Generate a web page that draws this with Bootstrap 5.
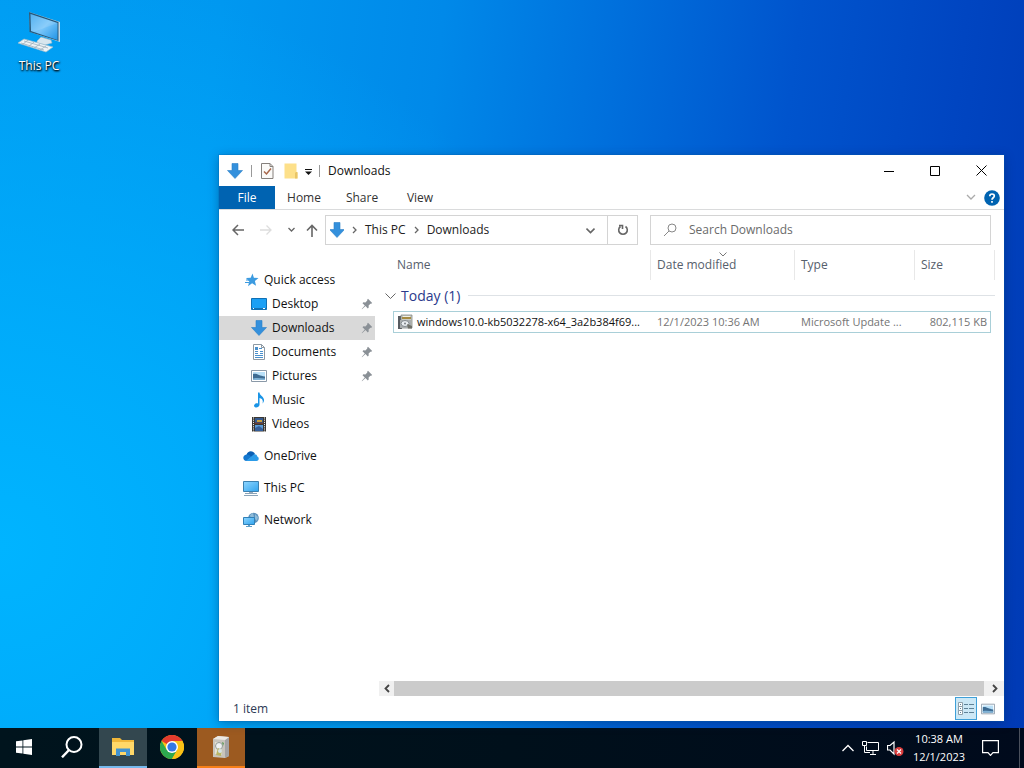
<!DOCTYPE html>
<html lang="en">
<head>
<meta charset="utf-8">
<meta name="viewport" content="width=device-width, initial-scale=1">
<title>Downloads</title>
<link href="https://cdn.jsdelivr.net/npm/bootstrap@5.3.0/dist/css/bootstrap.min.css" rel="stylesheet">
<script src="https://cdn.jsdelivr.net/npm/bootstrap@5.3.0/dist/js/bootstrap.bundle.min.js"></script>
<style>
  body { font: 12px/16px "Open Sans", "Noto Sans", sans-serif; color: #111; background: #0078d7; }
  a { color: inherit; text-decoration: none; }
  svg { display: block; flex: none; }
  .plain { border: 0; padding: 0; background: none; color: inherit; display: flex; align-items: center; justify-content: center; }
  .ln { fill: none; stroke: currentColor; }

  .wallpaper {
    background:
      radial-gradient(ellipse 62% 80% at 0% 75%, #00b4ff 0%, #00b0fdcc 35%, #00a4f800 100%),
      linear-gradient(97deg, #009cf2 0%, #0098f0 20%, #0089e9 40%, #006fdc 56%, #0054cd 72%, #0045c1 87%, #003ab5 100%);
  }
  .desk-icon { left: 2px; top: 10px; width: 74px; gap: 2px; color: #fff; text-shadow: 1px 1px 2px #000, 0 1px 2px #000; }
  .explorer { left: 219px; right: 20px; top: 155px; bottom: 7px; background: #fff; box-shadow: 0 0 0 1px #0060b040, 0 2px 10px #00245066; }

  .title-row { height: 31px; padding-left: 8px; }
  .tools { gap: 6px; margin: 0 6px 0 8px; }
  .sep { width: 1px; height: 12px; background: #999; }
  .cap { width: 46px; height: 31px; color: #000; }
  .tab-row { height: 24px; border-bottom: 1px solid #dadbdc; color: #333; }
  .tab-row .tab { width: 58px; text-align: center; line-height: 24px; }
  .tab-row .file-tab { width: 56px; background: #0063b1; color: #fff; height: 23px; }
  .address-row { height: 40px; padding: 5px 13px 5px 9px; color: #666; }
  .go-up { margin: 0 3px 0 7px; }
  .boxed { height: 30px; border: 1px solid #d4d4d4; }
  .address { flex: 312 1 0; color: #222; }
  .search { flex: 332 1 0; color: #888; margin-left: 12px; }
  .search input { border: 0; outline: 0; background: none; color: #666; padding: 0; }
  .search input::placeholder { color: #6b6b6b; opacity: 1; }
  .refresh { width: 30px; height: 28px; border-left: 1px solid #d4d4d4; color: #666; }
  .chev { fill: none; stroke: #666; }

  .tree { flex: none; width: 156px; padding-top: 18px; }
  .tree a { display: flex; align-items: center; height: 24px; padding-left: 24px; }
  .tree a svg:first-child { margin-right: 5px; }
  .tree .sub a { padding-left: 32px; }
  .tree .sub a.on { background: #d9d9d9; }
  .tree .pin { margin-left: auto; margin-right: 2px; color: #8a9096; }
  .files { margin-left: 4px; min-width: 0; }
  .list-area { padding: 0 9px 0 5px; }

  .listing { table-layout: fixed; width: 100%; border-collapse: separate; border-spacing: 0; }
  .listing th, .listing td { font-weight: 400; padding: 0 6px; white-space: nowrap; }
  .listing thead th { height: 30px; color: #56606c; border-right: 1px solid #e8e8e8; }
  .listing thead th.open, .listing thead th:first-child { border-right: 0; }
  .listing .group { height: 31px; font-size: 14px; color: #2b3a8c; padding: 0; }
  .listing tbody td { height: 22px; font-size: 11px; color: #747474; border: 1px solid #a9cfd8; border-width: 1px 0; }
  .listing tbody td.lead-cell { border-left-width: 1px; color: #111; padding: 0 0 0 3px; }
  .listing tbody td.last-cell { border-right-width: 1px; padding-right: 3px; text-align: right; }
  .listing tbody td.bare { border: 0; padding: 0; }
  .sort { position: absolute; left: 68px; top: 2px; color: #777; }
  .hscroll { height: 15px; background: #f0f0f0; color: #444; padding-right: 2px; }
  .hscroll button { width: 15px; height: 15px; }
  .hscroll .thumb { background: #cbcbcb; margin-right: 3px; }
  .status { height: 25px; padding: 0 5px 0 14px; color: #2c3a55; }
  .view-on { width: 22px; height: 23px; border: 1px solid #3fa0d8; background: #cce8f6; }
  .view-off { width: 22px; height: 23px; }

  .taskbar { height: 40px; background: linear-gradient(90deg, #00141d, #00101b 50%, #000a1c); color: #fff; }
  .taskbar .app { width: 48px; height: 40px; border-bottom: 2px solid transparent; }
  .taskbar .app.files-app { background: #33474f; border-color: #76b9ed; margin: 0 1px 0 3px; }
  .taskbar .app.alert-app { background: #9c5a20; border-color: #f77f18; margin-left: 1px; }
  .clock { width: 70px; font-size: 11px; line-height: 18px; text-align: center; }
  .notify { margin: 0 20px 0 8px; }
  .peek { width: 5px; height: 40px; border-left: 1px solid #4a505c; }
</style>
</head>
<body>
<svg width="0" height="0" class="position-absolute" aria-hidden="true">
  <defs>
    <linearGradient id="blue" x1="0" y1="0" x2="1" y2="1"><stop offset="0" stop-color="#8fd6ff"/><stop offset="1" stop-color="#2fa3ee"/></linearGradient>
    <linearGradient id="screen" x1="0" y1="0" x2="1" y2="1"><stop offset="0" stop-color="#3ba6ee"/><stop offset=".5" stop-color="#79c6fa"/><stop offset="1" stop-color="#1f94e6"/></linearGradient>
    <symbol id="down" viewBox="0 0 16 16"><path d="M5 .5h6v7h4.500L8 15.500.5 7.500H5z" fill="#3490dc" stroke="#2a7fc8" stroke-width=".6"/></symbol>
    <symbol id="pic" viewBox="0 0 16 16"><path d="M.5 2.500h15v11H.5z" fill="#fff" stroke="#8a99a8"/><path d="M2 4h12v8H2z" fill="#b9e0f8"/><path d="M2 6c4-1 6 2 12 2.500V12H2z" fill="#3e6c93"/><path d="M2 10.500c4-1 8 0 12 0V12H2z" fill="#7fb2d6"/></symbol>
    <symbol id="pin" viewBox="0 0 12 12"><path d="M7 .8 11.200 5l-1 .8-.8-.1-1.800 1.800.1 2-.9.900L4.500 8.100 1 11.200.7 11 3.800 7.500 1.500 5.200l.9-.9 2 .1 1.900-1.800-.1-.9z" fill="currentColor"/></symbol>
    <symbol id="box" viewBox="0 0 16 16"><path d="M1 2h4v13H1z" fill="#565b60"/><path d="M4 1h11v13H4z" fill="#c9cbc4" stroke="#777b7a" stroke-width=".7"/><path d="M5 3h9v2H5z" fill="#a58b42"/><path d="M6 2h7v1H6z" fill="#f1efe2"/><path d="M3 6h11v8H3z" fill="#a9adae"/><ellipse cx="8" cy="9.500" rx="4" ry="3" fill="#e9edf0" stroke="#848b90"/><circle cx="8" cy="9.500" r="1" fill="#7b8086"/><path d="m10 10 5 2v2.500h-4z" fill="#6e6f68"/></symbol>
  </defs>
</svg>

<div class="d-flex flex-column vh-100 overflow-hidden">
  <main class="wallpaper position-relative flex-grow-1">
    <a href="#" class="desk-icon position-absolute d-flex flex-column align-items-center">
      <svg width="46" height="46" viewBox="0 0 46 46">
        <path d="m21 31 4-4 10 3 1 3-7 2-8-2z" fill="#d8e6ee" stroke="#8fb4c8" stroke-width=".6"/>
        <path d="m13 2 31 10v20L14 22z" fill="#c3dbe8"/><path d="m13 2 29.500 10v19L13.500 22z" fill="#26597c"/>
        <path d="m14.500 4 27 9v17l-26.500-9z" fill="url(#screen)"/><path d="m14.500 4 27 9-24 9-2.500-1z" fill="#fff" opacity=".13"/>
        <path d="m2 33 6-4 29 8-7 5z" fill="#eef3f6" stroke="#9dbccb" stroke-width=".7"/>
        <path d="m5 33 23 7M8 31l24 7M12 30l-6 5M18 32l-6 5M24 34l-6 4M30 36l-6 4" stroke="#9db0bc" fill="none" stroke-width=".8"/>
      </svg>
      <span>This PC</span>
    </a>

    <section class="explorer position-absolute d-flex flex-column">
      <header class="title-row d-flex align-items-center">
        <svg width="16" height="16"><use href="#down"/></svg>
        <span class="sep ms-2"></span>
        <div class="tools d-flex align-items-center">
          <button class="plain" aria-label="Properties"><svg width="14" height="16" viewBox="0 0 14 16"><path d="M1.500.5H10l3 3v12H1.500z" fill="#fbfaf8" stroke="#85807c"/><path d="M10 .5v3h3" fill="none" stroke="#85807c"/><path d="m4 8.500 2.500 2.500L11 5.500" fill="none" stroke="#a8674a" stroke-width="1.500"/></svg></button>
          <button class="plain ms-1" aria-label="New folder"><svg width="14" height="16" viewBox="0 0 14 16"><path d="M.5.500h12V9l1 1v5.500H.5z" fill="#fde08a"/><path d="M12 9h1.500v6.500H11V10z" fill="#e9c566"/></svg></button>
          <button class="plain" aria-label="Customize toolbar"><svg width="9" height="10" viewBox="0 0 9 10"><path d="M1 3.500h7" stroke="#111"/><path d="M1 5.500h7L4.500 9z" fill="#111"/></svg></button>
        </div>
        <span class="sep me-2"></span>
        <span>Downloads</span>
        <button class="plain cap ms-auto" aria-label="Minimize"><svg width="10" height="10"><path class="ln" d="M0 5.500h10"/></svg></button>
        <button class="plain cap" aria-label="Maximize"><svg width="10" height="10"><path class="ln" d="M.5.500h9v9h-9z"/></svg></button>
        <button class="plain cap" aria-label="Close"><svg width="11" height="11"><path class="ln" d="m.5.500 10 10m0-10-10 10"/></svg></button>
      </header>

      <nav class="tab-row d-flex align-items-center">
        <a href="#" class="tab file-tab">File</a><a href="#" class="tab">Home</a><a href="#" class="tab">Share</a><a href="#" class="tab">View</a>
        <button class="plain ms-auto" aria-label="Expand ribbon"><svg width="10" height="8" viewBox="0 0 10 8"><path fill="none" stroke="#aaa" stroke-width="1.300" d="m1 1 4 4 4-4"/></svg></button>
        <button class="plain me-1 ms-2" aria-label="Help"><svg width="16" height="16" viewBox="0 0 16 16"><circle cx="8" cy="8" r="7.800" fill="#0063b1"/><path d="M5.800 6.200C5.800 3.200 10.400 3.400 10.300 6 10.200 7.800 8 7.800 8 9.800M8 11v1.800" fill="none" stroke="#fff" stroke-width="1.700"/></svg></button>
      </nav>

      <div class="address-row d-flex align-items-center">
        <button class="plain ms-1" aria-label="Back"><svg width="12" height="12" viewBox="0 0 12 12"><path class="ln" stroke-width="1.500" d="M12 6H1m5-5L1 6l5 5"/></svg></button>
        <button class="plain ms-3" aria-label="Forward" disabled><svg width="12" height="12" viewBox="0 0 12 12"><path d="M0 6h11M6.500 1.500 11 6l-4.500 4.500" stroke="#ddd" stroke-width="1.300" fill="none"/></svg></button>
        <button class="plain ms-3" aria-label="Recent locations"><svg width="7" height="6" viewBox="0 0 7 6"><path class="ln" stroke-width="1.300" d="m.5 1 3 3 3-3"/></svg></button>
        <button class="plain go-up px-1" aria-label="Up"><svg width="12" height="13" viewBox="0 0 12 13"><path class="ln" stroke-width="1.600" d="M6 13V1M1 6.500l5-5 5 5"/></svg></button>
        <div class="address boxed d-flex align-items-center">
          <svg class="ms-1 me-2" width="14" height="16" viewBox="1 0 14 16"><use href="#down" width="16" height="16"/></svg>
          <svg width="5" height="8" viewBox="0 0 5 8"><path class="chev" stroke-width="1.300" d="m1 1 3 3-3 3"/></svg>
          <a href="#" class="mx-2">This PC</a>
          <svg width="5" height="8" viewBox="0 0 5 8"><path class="chev" stroke-width="1.300" d="m1 1 3 3-3 3"/></svg>
          <a href="#" class="mx-2">Downloads</a>
          <button class="plain ms-auto me-1 px-1" aria-label="Previous locations"><svg class="me-1" width="9" height="7" viewBox="0 0 9 7"><path class="chev" stroke-width="1.600" d="m.5 1.500 4 4 4-4"/></svg></button>
          <button class="plain refresh" aria-label="Refresh"><svg width="12" height="12" viewBox="0 0 12 12"><path class="ln" stroke-width="1.600" d="M8.500 2.500a4.300 4.300 0 1 1-5 0M2 1.500h3.500V5"/></svg></button>
        </div>
        <label class="search boxed d-flex align-items-center ps-2">
          <svg class="ms-1 me-2" width="14" height="14" viewBox="0 0 14 14"><circle cx="9" cy="5" r="4" class="ln"/><path class="ln" d="M6 8 1 13"/></svg>
          <input type="search" class="flex-grow-1 ms-1" placeholder="Search Downloads" aria-label="Search Downloads">
        </label>
      </div>

      <div class="d-flex flex-grow-1">
        <nav class="tree">
          <a href="#"><svg width="16" height="16" viewBox="0 0 16 16"><path d="m9.500 1.500 1.400 4.300 4.600.2-3.600 3 1.200 4.800-4-2.500-4.100 3L6.300 9.500 3 6l4.700-.2z" fill="#3c9be0"/><path d="M3 8h3M2 10.500h4" stroke="#3c9be0"/></svg>Quick access</a>
          <div class="sub">
            <a href="#"><svg width="16" height="16" viewBox="0 0 16 16"><path d="M.5 2.500h15v11H.5z" fill="#1ba0f5" stroke="#1070b4"/><path d="M1 12.500h14" stroke="#1272b5"/><path d="M2 12.500h1m9 0h2" stroke="#fff"/></svg>Desktop<svg class="pin" width="12" height="12"><use href="#pin"/></svg></a>
            <a href="#" class="on"><svg width="16" height="16"><use href="#down"/></svg>Downloads<svg class="pin" width="12" height="12"><use href="#pin"/></svg></a>
            <a href="#"><svg width="16" height="16" viewBox="0 0 16 16"><path d="M2.500.5h8l3 3v12h-11z" fill="#fff" stroke="#8d99a3"/><path d="M10.500.5v3h3" fill="none" stroke="#8d99a3"/><path d="M4 7.500h3m2 0h3M4 9.500h3m2 0h3M4 11.500h8M4 13.500h8M8 4.500h3" stroke="#4a90cc"/><path d="M4 3h3v3H4z" fill="#4a90cc"/></svg>Documents<svg class="pin" width="12" height="12"><use href="#pin"/></svg></a>
            <a href="#"><svg width="16" height="16"><use href="#pic"/></svg>Pictures<svg class="pin" width="12" height="12"><use href="#pin"/></svg></a>
            <a href="#"><svg width="16" height="16" viewBox="0 0 16 16"><path d="M7 .5h1.500C9 4 13.500 5 13 8.500c-.2 1.500-.8 2.300-1.500 3C12.500 8 11 6.500 8.500 6v7c-.3 1.700-2 2.700-3.700 2.500-1.700-.3-2.300-1.700-1.300-3 .8-1.100 2.300-1.500 3.500-1z" fill="#1a94e6"/></svg>Music</a>
            <a href="#"><svg width="16" height="16" viewBox="0 0 16 16"><path d="M1 1h14v14.500H1z" fill="#3a3733"/><path d="M4 2h8v6H4z" fill="#34598e"/><path d="M4 9h8v6H4z" fill="#5b9bd6"/><path d="M6 4h5v2H6z" fill="#c9a23e"/><path d="M4 6.500h8V8H4z" fill="#6a3d35"/><path d="m4 12 4-2 4 3v2H4z" fill="#345e99"/><path d="M2.500 1.500v14M13.500 1.500v14" stroke="#fff" stroke-dasharray="1 1.200"/></svg>Videos</a>
          </div>
          <a href="#" class="mt-2"><svg width="16" height="16" viewBox="0 0 16 16"><path d="M3.500 7C4.500 2.500 10 2 12 6l-4 4z" fill="#0a5fb4"/><path d="M3.500 13C-.5 13-1 7 3.500 6.500c2-.3 3.500.8 5 2.500z" fill="#1377cf"/><path d="M3 13 9.500 7.500C11 5.500 14 6 14.200 8.500c2 .5 2.300 4.300-.7 4.500z" fill="#2b9be8"/></svg>OneDrive</a>
          <a href="#" class="mt-2"><svg width="16" height="16" viewBox="0 0 16 16"><path d="M.5 1.500h15v10H.5z" fill="url(#blue)" stroke="#3a80b0"/><path d="M6 12h4v1H6z" fill="#9ab"/><path d="M2 13.500h12M1 15.500h14" stroke="#8ba4b8"/></svg>This PC</a>
          <a href="#" class="mt-2"><svg width="16" height="16" viewBox="0 0 16 16"><circle cx="10.500" cy="6" r="5.300" fill="#5a90bb"/><path d="m7 3 3-2 1 4-3 3zM12 2l3 3-1 4-2-2z" fill="#8fbbd8"/><path d="M.5 5.500h11v7H.5z" fill="url(#blue)" stroke="#2f80b8"/><path d="M5 13h2v1H5zM3 14h6v1H3z" fill="#5f9fc8"/></svg>Network</a>
        </nav>

        <div class="files flex-grow-1 d-flex flex-column">
          <div class="list-area flex-grow-1">
            <table class="listing">
              <colgroup><col style="width:9px"><col><col style="width:144px"><col style="width:120px"><col style="width:76px"><col style="width:4px"></colgroup>
              <thead>
                <tr><th></th><th class="ps-1">Name</th><th class="position-relative">Date modified<svg class="sort" width="8" height="5" viewBox="0 0 8 5"><path class="ln" d="m.5.500 3.500 3.500L7.500.500"/></svg></th><th>Type</th><th class="open">Size</th><th class="p-0"></th></tr>
              </thead>
              <tbody>
                <tr><th class="group" colspan="6"><div class="d-flex align-items-center"><svg width="13" height="8" viewBox="0 0 13 8"><path class="chev" d="m1.500 1.500 5 5 5-5"/></svg><span class="ms-1 me-2">Today (1)</span><span class="flex-grow-1 border-top"></span></div></th></tr>
                <tr>
                  <td class="bare"></td>
                  <td class="lead-cell"><div class="d-flex align-items-center"><svg class="me-1" width="16" height="16"><use href="#box"/></svg>windows10.0-kb5032278-x64_3a2b384f69...</div></td>
                  <td>12/1/2023 10:36 AM</td><td>Microsoft Update ...</td><td class="last-cell">802,115 KB</td><td class="bare"></td>
                </tr>
              </tbody>
            </table>
          </div>
          <div class="hscroll d-flex">
            <button class="plain" aria-label="Scroll left"><svg width="6" height="9" viewBox="0 0 6 9"><path class="ln" stroke-width="1.800" d="m5 1-3.500 3.500L5 8"/></svg></button>
            <div class="thumb flex-grow-1"></div>
            <button class="plain" aria-label="Scroll right"><svg width="6" height="9" viewBox="0 0 6 9"><path class="ln" stroke-width="1.800" d="m1 1 3.500 3.500L1 8"/></svg></button>
          </div>
        </div>
      </div>

      <footer class="status d-flex align-items-center">
        <span class="me-auto">1 item</span>
        <button class="plain view-on" aria-label="Details view"><svg width="16" height="14" viewBox="0 0 16 14"><path d="M.5.500h4v4h-4zM.5 4.500h4v4h-4zM.5 8.500h4v4h-4z" fill="#fff" stroke="#8fa0aa"/><path d="M2 2.500h1m-1 4h1m-1 4h1M6 2.500h4m1 0h5m-10 4h4m1 0h5m-10 4h4m1 0h5" stroke="#5f8297"/></svg></button>
        <button class="plain view-off" aria-label="Thumbnail view"><svg width="14" height="14"><use href="#pic"/></svg></button>
      </footer>
    </section>
  </main>

  <footer class="taskbar d-flex align-items-center">
    <button class="plain app" aria-label="Start"><svg width="16" height="16" viewBox="0 0 16 16"><path d="M0 2.300 6.500 1.400v6.200H0zM7.300 1.200 16 0v7.600H7.300zM0 8.400h6.500v6.200L0 13.700zM7.300 8.400H16V16l-8.700-1.200z" fill="#fff"/></svg></button>
    <button class="plain app" aria-label="Search"><svg width="22" height="22" viewBox="0 0 22 22"><circle cx="13" cy="8.500" r="7.500" class="ln" stroke-width="2"/><path class="ln" stroke-width="2.400" d="M8 14 1 21.300"/></svg></button>
    <button class="plain app files-app" aria-label="File Explorer"><svg width="22" height="18" viewBox="0 0 22 18"><path d="M0 0h8l2 2h12v15H0z" fill="#f0b73a"/><path d="M0 4h22v13H0z" fill="#ffd869"/><path d="M4 18v-7.500h14V18h-4v-4H8v4z" fill="#4293d0"/></svg></button>
    <button class="plain app" aria-label="Google Chrome"><svg width="24" height="24" viewBox="0 0 24 24"><circle cx="12" cy="12" r="12" fill="#fbc116"/><path d="M12 12 1.600 6A12 12 0 0 1 22.400 6z" fill="#e33b2e"/><path d="M1.600 6A12 12 0 0 0 12 24l5.200-9H6.800z" fill="#2da94f"/><path d="M12 6h10.400A12 12 0 0 1 12 24l5.200-9z" fill="#fbc116"/><circle cx="12" cy="12" r="6" fill="#fff"/><circle cx="12" cy="12" r="4.600" fill="#3478e5"/></svg></button>
    <button class="plain app alert-app" aria-label="Update Installer"><svg width="20" height="24" viewBox="0 0 20 24"><path d="m2 4 5-3 11 1v19l-4 2-12-1z" fill="#c8c4bc"/><path d="m14 5 4-3v19l-4 2z" fill="#a3a2a4"/><path d="m2 4 5-3 11 1-4 3z" fill="#ece9e4"/><path d="m4 7 7 1v12l-7-1z" fill="#e7e3d3"/><circle cx="8" cy="11" r="3.500" fill="#eff2f3" stroke="#929a96"/><path d="m7 13 4 2-1 6-5-1z" fill="#b9b567"/><path d="m11 7 2 1-1 3z" fill="#5b9b58"/><circle cx="9" cy="16" r="2" fill="#d6e3ea"/></svg></button>
    <button class="plain ms-auto" aria-label="Show hidden icons"><svg width="12" height="8" viewBox="0 0 12 8"><path class="ln" stroke-width="1.300" d="m.5 7 5.500-5.500L11.500 7"/></svg></button>
    <button class="plain ms-2" aria-label="Ethernet"><svg width="17" height="16" viewBox="0 0 17 16"><path class="ln" d="M5.500 2.500h11v8H4.500v-4M8 14.500h6M11 10.500v4M.5 1.500h4v4h-4zM2.500 5.500v7H8"/></svg></button>
    <button class="plain ms-2" aria-label="Volume muted"><svg width="17" height="16" viewBox="0 0 17 16"><path class="ln" stroke-width="1.200" d="M.5 5.500h2.500L7 2v12l-4-4H.5z"/><circle cx="12" cy="11.500" r="4.500" fill="#d93c3c"/><path d="m10 9.500 4 4m0-4-4 4" stroke="#fff" stroke-width="1.200"/></svg></button>
    <button class="plain clock d-block"><span class="d-block">10:38 AM</span><span class="d-block">12/1/2023</span></button>
    <button class="plain notify" aria-label="Notifications"><svg width="17" height="16" viewBox="0 0 17 16"><path class="ln" stroke-width="1.200" d="M.6.600h15.800v12H11l-2.500 2.800L6 12.600H.6z"/></svg></button>
    <span class="peek"></span>
  </footer>
</div>
</body>
</html>
